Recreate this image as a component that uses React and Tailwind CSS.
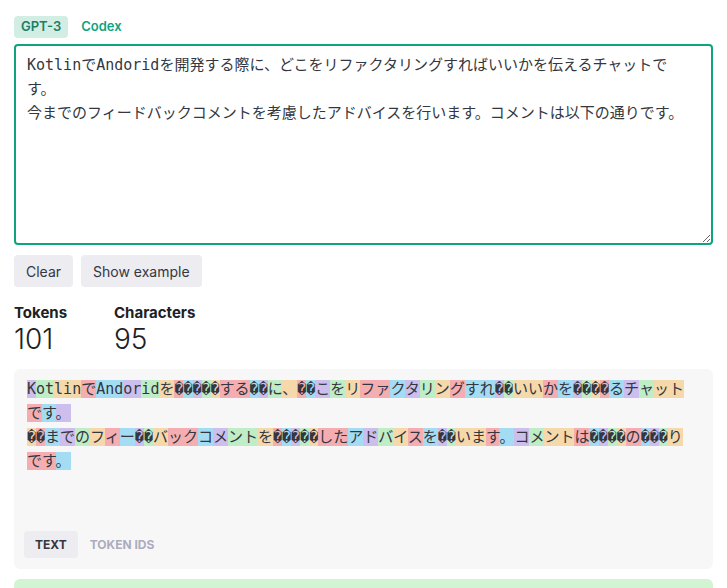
import React from 'react'

const COLORS = [
  'bg-[rgba(107,64,216,0.3)]',
  'bg-[rgba(104,222,122,0.4)]',
  'bg-[rgba(244,172,54,0.4)]',
  'bg-[rgba(239,65,70,0.4)]',
  'bg-[rgba(39,181,234,0.4)]',
]

const Q = '\uFFFD'

const TOKENS = [
  'K', 'ot', 'lin', 'で', 'And', 'or', 'id', 'を', Q, Q, Q, Q, Q, 'する', Q, Q, 'に', '、', Q, Q,
  'こ', 'を', 'リ', 'ファ', 'ク', 'タ', 'リ', 'ン', 'グ', 'すれ', Q, Q, 'いい', 'か', 'を', Q, Q, Q, Q,
  'る', 'チ', 'ャ', 'ット', 'で', 'す', '。', '\n',
  Q, Q, 'ま', 'で', 'の', 'フ', 'ィ', 'ー', Q, Q, 'バ', 'ック', 'コ', 'メ', 'ント', 'を', Q, Q, Q, Q, Q,
  'した', 'ア', 'ド', 'バ', 'イ', 'ス', 'を', Q, Q, 'いま', 'す', '。', 'コ', 'メ', 'ント', 'は',
  Q, Q, Q, Q, 'の', Q, Q, Q, 'り', 'です', '。',
]

const INPUT =
  'KotlinでAndoridを開発する際に、どこをリファクタリングすればいいかを伝えるチャットです。\n今までのフィードバックコメントを考慮したアドバイスを行います。コメントは以下の通りです。'

export default function App() {
  return (
    <div className="min-h-[588px] bg-white px-[14px] pt-[16px] font-['Inter','Noto_Sans',sans-serif] text-[#353740]">
      {/* Model tabs */}
      <div className="flex items-center h-[22px]">
        <span className="h-[22px] px-[7px] rounded-[4px] bg-[#d2ede4] text-[#1a7f64] text-[13px] font-semibold flex items-center">
          GPT-3
        </span>
        <span className="ml-[13px] text-[#10a37f] text-[13px] font-semibold">Codex</span>
      </div>

      {/* Input */}
      <textarea
        defaultValue={INPUT}
        className="mt-[6px] block w-full h-[201px] border-2 border-[#10a37f] rounded-[4px] pl-[11px] pr-[23px] pt-[7px] text-[15px] leading-[24px] text-[#353740] outline-none font-['DejaVu_Sans_Mono','Noto_Sans_CJK_JP',monospace]"
      />

      {/* Buttons */}
      <div className="mt-[10px] flex gap-2">
        <button className="h-[32px] px-[12px] rounded-[4px] bg-[#ececf1] text-[14px] text-[#353740]">Clear</button>
        <button className="h-[32px] px-[12px] rounded-[4px] bg-[#ececf1] text-[14px] text-[#353740]">Show example</button>
      </div>

      {/* Stats */}
      <div className="mt-[16px] flex">
        <div className="w-[100px]">
          <div className="text-[15px] leading-[20px] font-bold text-[#202123]">Tokens</div>
          <div className="text-[28px] leading-[33px] font-light text-[#202123]">101</div>
        </div>
        <div>
          <div className="text-[15px] leading-[20px] font-bold text-[#202123]">Characters</div>
          <div className="text-[28px] leading-[33px] font-light text-[#202123]">95</div>
        </div>
      </div>

      {/* Token output */}
      <div className="mt-[13px] h-[200px] rounded-[6px] bg-[#f7f7f8] px-[10px] pt-[8px] pb-[11px] flex flex-col">
        <div className="pl-[3px] pr-[14px] text-[15px] leading-[24px] whitespace-pre-wrap text-[#353740] font-['DejaVu_Sans_Mono','Noto_Sans_CJK_JP',monospace]">
          {TOKENS.map((t, i) =>
            t === '\n' ? (
              <br key={i} />
            ) : (
              <span key={i} className={COLORS[i % 5]}>
                {t}
              </span>
            )
          )}
        </div>
        <div className="mt-auto flex items-center">
          <span className="h-[27px] px-[11px] rounded-[4px] bg-[#ececf1] text-[12px] font-bold text-[#353740] flex items-center">
            TEXT
          </span>
          <span className="ml-[12px] text-[12px] font-bold text-[#acacbe]">TOKEN IDS</span>
        </div>
      </div>

      <div className="mt-[10px] h-[20px] rounded-t-[6px] bg-[#d2f4d3]" />
    </div>
  )
}
